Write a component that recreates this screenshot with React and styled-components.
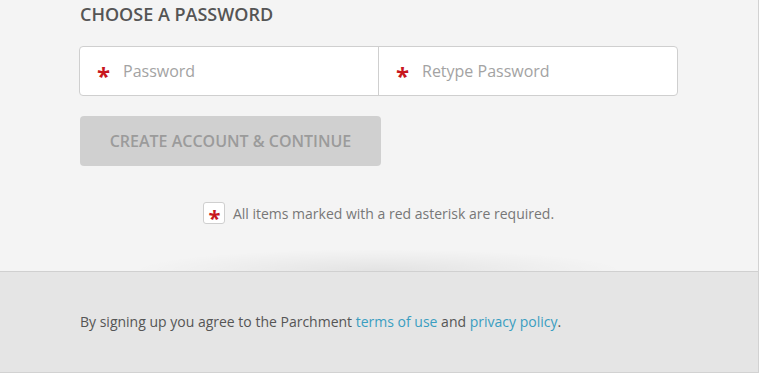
import styled, { createGlobalStyle } from 'styled-components';

const GlobalStyle = createGlobalStyle`
  body {
    margin: 0;
    background: #f4f4f4;
    font-family: "Open Sans", "Liberation Sans", sans-serif;
  }
`;

const Page = styled.div`
  width: 758px;
  border-right: 1px solid #d2d2d2;
  border-bottom: 1px solid #d2d2d2;
  background: #f4f4f4;
`;

const Main = styled.section`
  position: relative;
  padding: 0 80px 47px 79px;
`;

const Heading = styled.h2`
  margin: 0 0 0 1px;
  padding-top: 2px;
  font-size: 18px;
  line-height: 24px;
  font-weight: 600;
  color: #555;
`;

const Fields = styled.div`
  margin-top: 20px;
  display: grid;
  grid-template-columns: 298px 1fr;
  width: 599px;
  height: 50px;
  box-sizing: border-box;
  border: 1px solid #cfcfcf;
  border-radius: 4px;
  background: #fff;
  overflow: hidden;
`;

const Field = styled.label`
  display: flex;
  align-items: center;
  padding-left: 17px;
  border-left: ${(p) => (p.$first ? 'none' : '1px solid #cfcfcf')};
`;

const Asterisk = styled.span`
  color: #c8161e;
  font-size: ${(p) => p.$size || 24}px;
  font-weight: 700;
  line-height: 1;
  padding-top: ${(p) => p.$drop || 9}px;
  width: ${(p) => p.$width || 26}px;
`;

const Input = styled.input`
  flex: 1;
  min-width: 0;
  border: none;
  outline: none;
  background: transparent;
  font-family: inherit;
  font-size: 16px;
  color: #444;
  padding: 0;
  &::placeholder {
    color: #a3a3a3;
  }
`;

const Button = styled.button`
  display: block;
  margin: 20px 0 0 1px;
  width: 301px;
  height: 50px;
  border: none;
  border-radius: 4px;
  background: #d0d0d0;
  color: #9b9b9b;
  font-family: inherit;
  font-size: 16px;
  font-weight: 600;
  cursor: default;
`;

const Note = styled.p`
  margin: 36px 0 0;
  display: flex;
  align-items: center;
  justify-content: center;
  gap: 8px;
  font-size: 14px;
  color: #777;
`;

const NoteBox = styled.span`
  display: flex;
  align-items: center;
  justify-content: center;
  width: 22px;
  height: 22px;
  box-sizing: border-box;
  border: 1px solid #cfcfcf;
  border-radius: 3px;
  background: #fff;
`;

const Shadow = styled.div`
  position: absolute;
  left: 130px;
  right: 130px;
  bottom: 0;
  height: 22px;
  background: radial-gradient(ellipse at 50% 100%, rgba(0, 0, 0, 0.07) 0%, rgba(0, 0, 0, 0.025) 45%, rgba(0, 0, 0, 0) 70%);
  pointer-events: none;
`;

const Footer = styled.footer`
  border-top: 1px solid #d0d0d0;
  background: #e5e5e5;
  height: 101px;
  box-sizing: border-box;
  padding: 40px 80px 0;
  font-size: 14px;
  color: #555;
`;

const Link = styled.a`
  color: #3a9ec1;
  text-decoration: none;
`;

export default function App() {
  return (
    <>
      <GlobalStyle />
      <Page>
        <Main>
          <Heading>CHOOSE A PASSWORD</Heading>
          <Fields>
            <Field $first>
              <Asterisk>*</Asterisk>
              <Input type="password" placeholder="Password" />
            </Field>
            <Field>
              <Asterisk>*</Asterisk>
              <Input type="password" placeholder="Retype Password" />
            </Field>
          </Fields>
          <Button type="button">CREATE ACCOUNT &amp; CONTINUE</Button>
          <Note>
            <NoteBox>
              <Asterisk $size={22} $drop={8} $width={11}>*</Asterisk>
            </NoteBox>
            All items marked with a red asterisk are required.
          </Note>
          <Shadow />
        </Main>
        <Footer>
          By signing up you agree to the Parchment <Link href="#">terms of use</Link> and{' '}
          <Link href="#">privacy policy</Link>.
        </Footer>
      </Page>
    </>
  );
}
